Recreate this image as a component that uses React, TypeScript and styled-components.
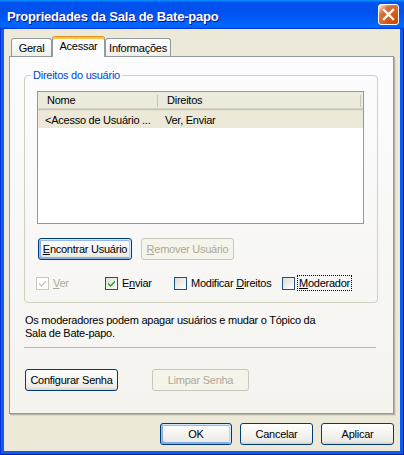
import React from "react";
import styled, { createGlobalStyle, css } from "styled-components";

const GlobalStyle = createGlobalStyle`
  html, body { margin: 0; padding: 0; background: #fff; }
  body { font-family: "Liberation Sans", Arial, sans-serif; font-size: 11px; letter-spacing: -0.25px; color: #000; }
  * { box-sizing: border-box; }
`;

const Window = styled.div`
  width: 404px;
  height: 455px;
  display: flex;
  flex-direction: column;
  background: #0a5cf0;
  box-shadow: inset 1px 0 #0831d9, inset -1px 0 #001ea0, inset 0 -1px #001ea0;
`;

const TitleBar = styled.div`
  height: 29px;
  flex: none;
  display: flex;
  align-items: center;
  justify-content: space-between;
  padding: 3px 5px 0 7px;
  background: linear-gradient(180deg, #0997ff, #0053ee 8%, #0050ee 40%, #06f 88%, #06f 93%, #005bff 95%, #003dd7 96%, #003dd7);
`;

const Title = styled.span`
  font-family: "Liberation Sans", Arial, sans-serif;
  font-weight: bold;
  font-size: 13px;
  letter-spacing: -0.2px;
  color: #fff;
  text-shadow: 1px 1px #0f1089;
`;

const CloseButton = styled.div`
  width: 21px;
  height: 21px;
  border: 1px solid #fff;
  border-radius: 3px;
  background: radial-gradient(circle at 90% 90%, #cc4600 0, #dc6527 55%, #cd7546 70%, #ffccb2 90%, #fff 100%);
  display: flex;
  align-items: center;
  justify-content: center;
  margin-top: -3px;
`;

const Body = styled.div`
  flex: 1;
  margin: 0 4px 4px 4px;
  background: #ece9d8;
  display: flex;
  flex-direction: column;
  padding: 7px 6px 0 5px;
`;

const TabStrip = styled.div`
  display: flex;
  align-items: flex-end;
  height: 20px;
  padding-left: 2px;
  position: relative;
  z-index: 1;
`;

const Tab = styled.div<{ $active?: boolean; $w: number }>`
  width: ${(p) => p.$w}px;
  height: 18px;
  display: flex;
  align-items: center;
  justify-content: center;
  border: 1px solid #919b9c;
  border-bottom: none;
  border-radius: 3px 3px 0 0;
  background: linear-gradient(180deg, #fff, #fafaf9 26%, #f0f0ea 95%, #ecebe5);
  ${(p) =>
    p.$active &&
    css`
      height: 21px;
      margin-bottom: -1px;
      padding-bottom: 2px;
      background: #fcfcfe;
      border-top: 1px solid #e68b2c;
      box-shadow: inset 0 2px #ffc73c;
    `}
`;

const TabPanel = styled.div`
  height: 358px;
  flex: none;
  border: 1px solid #919b9c;
  background: linear-gradient(180deg, #fcfcfe, #f4f3ee);
  box-shadow: 1px 1px #b6b4a5, 2px 2px #dcd9c9;
  padding: 12px 0 0 14px;
  display: flex;
  flex-direction: column;
  align-items: flex-start;
`;

const Group = styled.fieldset`
  margin: 0;
  width: 354px;
  border: 1px solid #d0d0bf;
  border-radius: 4px;
  padding: 9px 12px 11px 12px;
  display: flex;
  flex-direction: column;
  align-items: flex-start;
`;

const GroupLegend = styled.legend`
  color: #0046d5;
  padding: 0 2px;
  margin-left: -6px;
  line-height: 13px;
`;

const ListView = styled.div`
  width: 327px;
  height: 133px;
  border: 1px solid #7f9db9;
  background: #fff;
`;

const ListGrid = styled.div`
  display: grid;
  grid-template-columns: 120px 203px 1fr;
`;

const ListHeader = styled(ListGrid)`
  height: 19px;
  background: #ebeadb;
  box-shadow: inset 0 -1px #e2decd, inset 0 -2px #cbc7b8, inset 0 -3px #d6d2c2;
`;

const HeaderCell = styled.div`
  display: flex;
  align-items: center;
  padding: 0 0 3px 9px;
  background: linear-gradient(#c7c5b2, #c7c5b2) right 3px / 1px 12px no-repeat;
`;

const ListRow = styled(ListGrid)`
  height: 17px;
  background: #ece9d8;
`;

const RowCell = styled.div`
  display: flex;
  align-items: center;
  padding-left: 7px;
  white-space: nowrap;
`;

const ButtonRow = styled.div<{ $gap: number; $top: number; $left?: number }>`
  display: flex;
  gap: ${(p) => p.$gap}px;
  margin-top: ${(p) => p.$top}px;
  margin-left: ${(p) => p.$left ?? 0}px;
`;

const Button = styled.button<{ $w: number; $focus?: boolean }>`
  width: ${(p) => p.$w}px;
  height: 22px;
  padding: 0;
  font-family: "Liberation Sans", Arial, sans-serif;
  font-size: 11px;
  letter-spacing: -0.25px;
  color: #000;
  border: 1px solid #003c74;
  border-radius: 3px;
  background: linear-gradient(180deg, #fff, #ecebe6 86%, #d6d0c5);
  ${(p) =>
    p.$focus &&
    css`
      box-shadow: inset -1px 1px #cee7ff, inset 1px 2px #98b8ea, inset -2px 2px #bcd4f6, inset 1px -1px #89ade4, inset 2px -2px #89ade4;
    `}
  &:disabled {
    background: #f5f4ea;
    border-color: #c9c7ba;
    color: #aca899;
  }
`;

const CheckRow = styled.div`
  display: grid;
  grid-template-columns: 69px 69px 108px auto;
  margin-top: 15px;
  margin-left: -1px;
`;

const CheckItem = styled.label<{ $disabled?: boolean }>`
  display: flex;
  align-items: center;
  gap: 2px;
  color: ${(p) => (p.$disabled ? "#aca899" : "#000")};
`;

const Box = styled.span<{ $disabled?: boolean }>`
  width: 13px;
  height: 13px;
  flex: none;
  display: inline-flex;
  align-items: center;
  justify-content: center;
  border: 1px solid ${(p) => (p.$disabled ? "#cac8bb" : "#1c5180")};
  background: ${(p) => (p.$disabled ? "#fff" : "linear-gradient(135deg, #dcdcd7, #fff)")};
`;

const CheckLabel = styled.span<{ $focus?: boolean }>`
  line-height: 14px;
  padding: 0 1px;
  border: 1px dotted ${(p) => (p.$focus ? "#000" : "transparent")};
`;

const Note = styled.p`
  margin: 11px 0 0 1px;
  line-height: 13px;
`;

const Separator = styled.div`
  width: 352px;
  height: 1px;
  background: #bdbaa9;
  margin-top: 7px;
`;

const DialogButtons = styled.div`
  display: flex;
  justify-content: flex-end;
  gap: 8px;
  margin-top: 9px;
`;

const Check = ({ color }: { color: string }) => (
  <svg width="7" height="7" viewBox="0 0 7 7">
    <path d="M0 2.5 L2.5 5 L7 0.5 L7 2.5 L2.5 7 L0 4.5 Z" fill={color} />
  </svg>
);

type CBProps = { label: React.ReactNode; checked?: boolean; disabled?: boolean; focus?: boolean };
const CheckBox = ({ label, checked, disabled, focus }: CBProps) => (
  <CheckItem $disabled={disabled}>
    <Box $disabled={disabled}>{checked && <Check color={disabled ? "#cac8bb" : "#21a121"} />}</Box>
    <CheckLabel $focus={focus}>{label}</CheckLabel>
  </CheckItem>
);

export default function App() {
  return (
    <>
      <GlobalStyle />
      <Window>
        <TitleBar>
          <Title>Propriedades da Sala de Bate-papo</Title>
          <CloseButton>
            <svg width="13" height="13" viewBox="0 0 13 13">
              <path d="M2 2 L11 11 M11 2 L2 11" stroke="#fff" strokeWidth="2.4" strokeLinecap="square" />
            </svg>
          </CloseButton>
        </TitleBar>
        <Body>
          <TabStrip>
            <Tab $w={41}>Geral</Tab>
            <Tab $w={53} $active>
              Acessar
            </Tab>
            <Tab $w={66}>Informações</Tab>
          </TabStrip>
          <TabPanel>
            <Group>
              <GroupLegend>Direitos do usuário</GroupLegend>
              <ListView>
                <ListHeader>
                  <HeaderCell>Nome</HeaderCell>
                  <HeaderCell>Direitos</HeaderCell>
                  <div />
                </ListHeader>
                <ListRow>
                  <RowCell>&lt;Acesso de Usuário ...</RowCell>
                  <RowCell>Ver, Enviar</RowCell>
                  <div />
                </ListRow>
              </ListView>
              <ButtonRow $gap={9} $top={14} $left={1}>
                <Button $w={94} $focus>
                  <u>E</u>ncontrar Usuário
                </Button>
                <Button $w={93} disabled>
                  <u>R</u>emover Usuário
                </Button>
              </ButtonRow>
              <CheckRow>
                <CheckBox checked disabled label={<><u>V</u>er</>} />
                <CheckBox checked label={<>E<u>n</u>viar</>} />
                <CheckBox label={<>Modificar <u>D</u>ireitos</>} />
                <CheckBox focus label={<><u>M</u>oderador</>} />
              </CheckRow>
            </Group>
            <Note>
              Os moderadores podem apagar usuários e mudar o Tópico da
              <br />
              Sala de Bate-papo.
            </Note>
            <Separator />
            <ButtonRow $gap={34} $top={21} $left={1}>
              <Button $w={93}>Configurar Senha</Button>
              <Button $w={97} disabled>
                Limpar Senha
              </Button>
            </ButtonRow>
          </TabPanel>
          <DialogButtons>
            <Button $w={72} $focus>
              OK
            </Button>
            <Button $w={73}>Cancelar</Button>
            <Button $w={73}>Aplicar</Button>
          </DialogButtons>
        </Body>
      </Window>
    </>
  );
}
